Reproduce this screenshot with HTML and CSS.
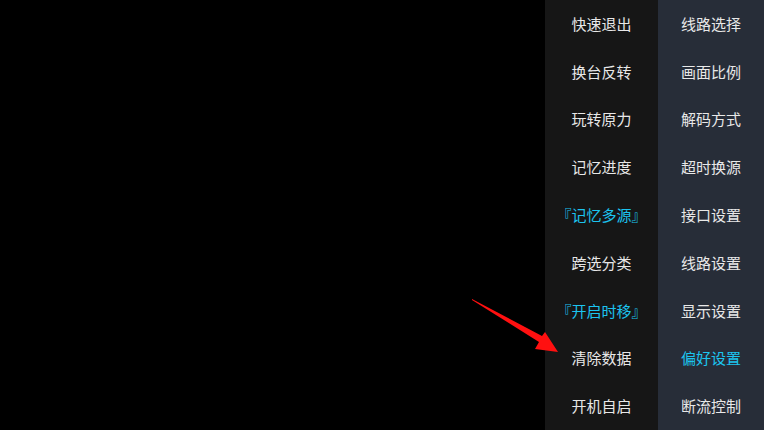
FILE: index.html
```html
<!DOCTYPE html>
<html lang="zh">
<head>
<meta charset="utf-8">
<link rel="stylesheet" href="styles.css">
</head>
<body>
<div class="screen">
  <div class="stage"></div>
  <div class="menu">
    <div class="col col-left">
      <div class="item">快速退出</div>
      <div class="item">换台反转</div>
      <div class="item">玩转原力</div>
      <div class="item">记忆进度</div>
      <div class="item active">『记忆多源』</div>
      <div class="item">跨选分类</div>
      <div class="item active">『开启时移』</div>
      <div class="item">清除数据</div>
      <div class="item">开机自启</div>
    </div>
    <div class="col col-right">
      <div class="item">线路选择</div>
      <div class="item">画面比例</div>
      <div class="item">解码方式</div>
      <div class="item">超时换源</div>
      <div class="item">接口设置</div>
      <div class="item">线路设置</div>
      <div class="item">显示设置</div>
      <div class="item active">偏好设置</div>
      <div class="item">断流控制</div>
    </div>
  </div>
  <svg class="arrow" width="764" height="430" viewBox="0 0 764 430">
    <polygon points="472,299 542,336 545,332 558,352 535,349 539,342 472,300" fill="#ff1010"/>
  </svg>
</div>
</body>
</html>
```

FILE: styles.css
```css
html, body {
  margin: 0;
  padding: 0;
  background: #000;
}
.screen {
  position: relative;
  width: 764px;
  height: 430px;
  display: flex;
  overflow: hidden;
  font-family: "Noto Sans CJK SC", "Noto Sans", sans-serif;
}
.stage {
  flex: 1;
  background: #000;
}
.menu {
  display: flex;
  height: 430px;
}
.col {
  display: grid;
  grid-template-rows: repeat(9, 1fr);
}
.col-left {
  width: 113px;
  background: #161616;
}
.col-right {
  width: 106px;
  background: #272d38;
}
.item {
  display: flex;
  align-items: center;
  justify-content: center;
  font-size: 15px;
  color: #e8e8e8;
  white-space: nowrap;
  padding-bottom: 1px;
}
.item.active {
  color: #1cc4ef;
}
.arrow {
  position: absolute;
  left: 0;
  top: 0;
  pointer-events: none;
}
```
